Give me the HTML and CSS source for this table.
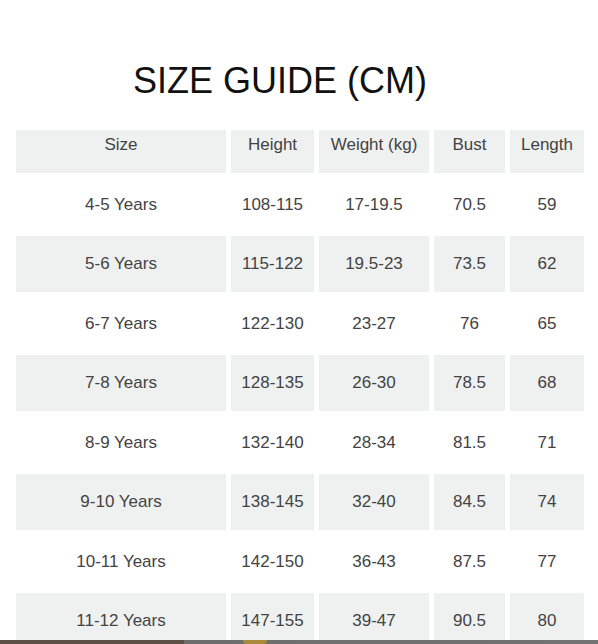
FILE: index.html
```html
<!DOCTYPE html>
<html lang="en">
<head>
<meta charset="utf-8">
<title>Size Guide</title>
<link rel="stylesheet" href="styles.css">
</head>
<body>
<main class="page">
  <h1 class="title">SIZE GUIDE (CM)</h1>
  <div class="chart">
    <div class="cell head">Size</div>
    <div class="cell head">Height</div>
    <div class="cell head">Weight (kg)</div>
    <div class="cell head">Bust</div>
    <div class="cell head">Length</div>

    <div class="cell">4-5 Years</div><div class="cell">108-115</div><div class="cell">17-19.5</div><div class="cell">70.5</div><div class="cell">59</div>
    <div class="cell shade">5-6 Years</div><div class="cell shade">115-122</div><div class="cell shade">19.5-23</div><div class="cell shade">73.5</div><div class="cell shade">62</div>
    <div class="cell">6-7 Years</div><div class="cell">122-130</div><div class="cell">23-27</div><div class="cell">76</div><div class="cell">65</div>
    <div class="cell shade">7-8 Years</div><div class="cell shade">128-135</div><div class="cell shade">26-30</div><div class="cell shade">78.5</div><div class="cell shade">68</div>
    <div class="cell">8-9 Years</div><div class="cell">132-140</div><div class="cell">28-34</div><div class="cell">81.5</div><div class="cell">71</div>
    <div class="cell shade">9-10 Years</div><div class="cell shade">138-145</div><div class="cell shade">32-40</div><div class="cell shade">84.5</div><div class="cell shade">74</div>
    <div class="cell">10-11 Years</div><div class="cell">142-150</div><div class="cell">36-43</div><div class="cell">87.5</div><div class="cell">77</div>
    <div class="cell shade">11-12 Years</div><div class="cell shade">147-155</div><div class="cell shade">39-47</div><div class="cell shade">90.5</div><div class="cell shade">80</div>
  </div>
</main>
<div class="strip"><span class="blob"></span></div>
</body>
</html>
```
FILE: styles.css
```css
html, body {
  margin: 0;
  padding: 0;
  background: #ffffff;
}
body {
  font-family: "Liberation Sans", Arial, sans-serif;
  height: 644px;
  overflow: hidden;
}
.page {
  padding-top: 60px;
}
.title {
  margin: 0 0 29px 133px;
  font-size: 36px;
  line-height: 41px;
  font-weight: normal;
  color: #111111;
}
.chart {
  margin-left: 16px;
  width: 568px;
  display: grid;
  grid-template-columns: 210px 83px 110px 71px 74px;
  grid-template-rows: 43px;
  grid-auto-rows: 56px;
  column-gap: 5px;
  row-gap: 3.5px;
}
.cell {
  display: flex;
  align-items: center;
  justify-content: center;
  font-size: 17px;
  color: #434343;
}
.head {
  background: #eff1f0;
  align-items: flex-start;
  padding-top: 5px;
}
.shade {
  background: #eff1f0;
}
.strip {
  position: fixed;
  left: 0;
  right: 0;
  bottom: 0;
  height: 4px;
  background: linear-gradient(to right, #5c5045 0, #5c5045 184px, #6d6d6d 184px, #727272 100%);
}
.blob {
  position: absolute;
  left: 243px;
  top: 0;
  width: 24px;
  height: 4px;
  border-radius: 0 0 12px 12px;
  background: #a98a3a;
}
```
